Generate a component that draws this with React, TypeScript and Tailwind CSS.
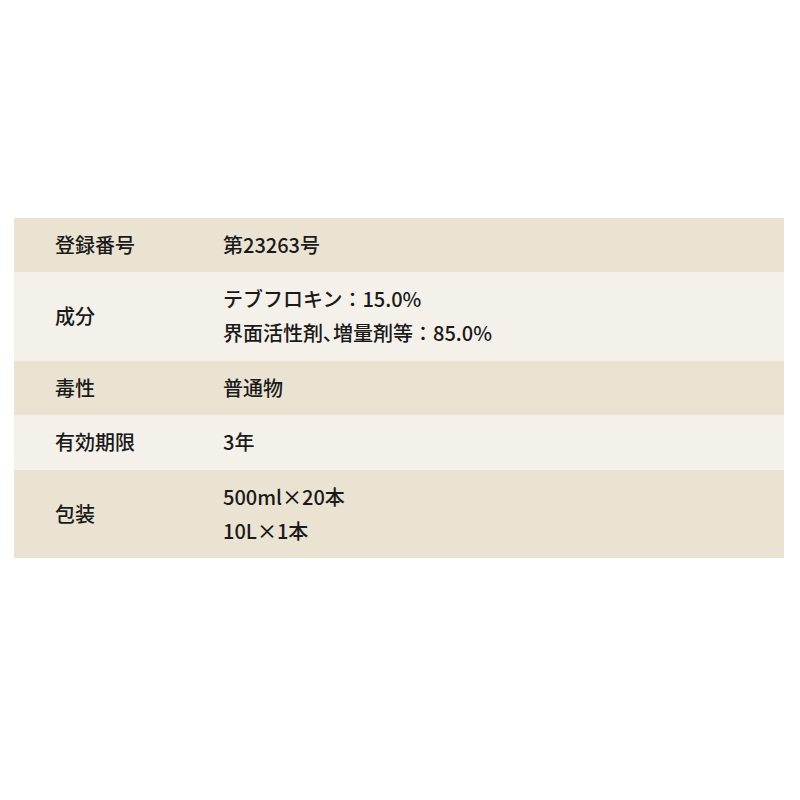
import type { ReactNode } from "react";

export default function App() {
  const comma = <span className="[font-feature-settings:'palt']">、</span>;
  const rows: { label: string; values: ReactNode[]; dark: boolean }[] = [
    { label: "登録番号", values: ["第23263号"], dark: true },
    {
      label: "成分",
      values: [
        "テブフロキン：15.0%",
        <>界面活性剤{comma}増量剤等：85.0%</>,
      ],
      dark: false,
    },
    { label: "毒性", values: ["普通物"], dark: true },
    { label: "有効期限", values: ["3年"], dark: false },
    { label: "包装", values: ["500ml×20本", "10L×1本"], dark: true },
  ];
  return (
    <div
      className="w-[800px] h-[800px] bg-white pt-[218px] pl-[14px] pr-[16px] text-[#1a1a1a]"
      style={{ fontFamily: '"Noto Sans CJK JP", "Noto Sans", sans-serif' }}
    >
      <div className="flex flex-col">
        {rows.map((r, i) => (
          <div
            key={i}
            className={`flex items-center py-[10px] ${r.dark ? "bg-[#ebe3d2]" : "bg-[#f4f1ea]"} ${i === 1 || i === 3 ? "pb-[11px]" : ""}`}
          >
            <div className="w-[209px] pl-[41px] text-[20px] leading-[34px] font-medium">{r.label}</div>
            <div className="flex flex-col text-[20px] leading-[34px] font-medium">
              {r.values.map((v, j) => (
                <div key={j}>{v}</div>
              ))}
            </div>
          </div>
        ))}
      </div>
    </div>
  );
}
